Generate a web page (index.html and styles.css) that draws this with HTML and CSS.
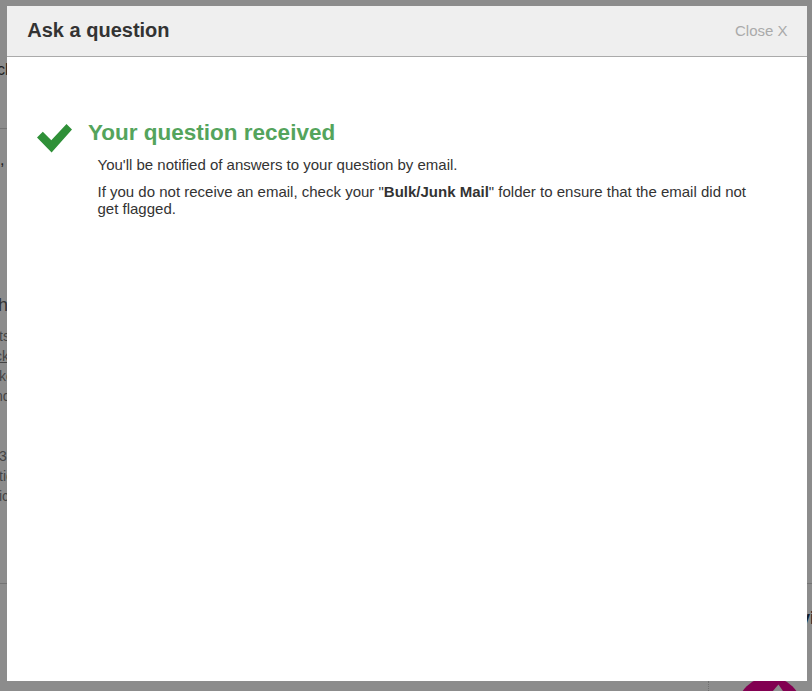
FILE: index.html
```html
<!DOCTYPE html>
<html lang="en">
<head>
<meta charset="utf-8">
<title>Ask a question</title>
<link rel="stylesheet" href="styles.css">
</head>
<body>
<div class="page">
  <div class="page-left">
    <div class="search">ch</div>
    <div class="comma">,</div>
    <div class="heading">h</div>
    <div class="copy">ts<br><u>ck</u><br>ke<br><span>nd</span></div>
    <div class="copy second">3<br>tio<br>ic</div>
  </div>
  <div class="page-bottom">
    <div class="divider-dots"></div>
    <svg class="badge" width="68" height="68" viewBox="0 0 68 68"><circle cx="33.500" cy="34" r="32.300" fill="#820051"/><path d="M36 17L42.500 9.500L49 19Z" fill="#8c8c8c"/></svg>
  </div>
  <div class="page-right"><span>vi</span></div>
</div>
<section class="modal">
  <header class="modal-header">
    <h1>Ask a question</h1>
    <span class="close">Close X</span>
  </header>
  <div class="modal-body">
    <svg class="check" width="36" height="30" viewBox="0 0 36 30"><path d="M0 14.500L5.800 8.700L14.300 17.200L29.500 1L35 6.600L14.600 29.500Z" fill="#2f9038"/></svg>
    <div class="message">
      <h2>Your question received</h2>
      <p>You'll be notified of answers to your question by email.</p>
      <p>If you do not receive an email, check your "<b>Bulk/Junk Mail</b>" folder to ensure that the email did not get flagged.</p>
    </div>
  </div>
</section>
</body>
</html>
```
FILE: styles.css
```css
* { box-sizing: border-box; }
body {
  margin: 0;
  height: 691px;
  overflow: hidden;
  position: relative;
  background: #8c8c8c;
  color: #333;
  font-family: "Liberation Sans", Arial, sans-serif;
}
h1, h2, p { margin: 0; }
.page {
  display: grid;
  grid-template-columns: 7px 800px 5px;
  height: 691px;
}
.page > div { overflow: hidden; }
.page-left {
  height: 584px;
  padding-top: 60px;
  border-bottom: 1px solid #747474;
  white-space: nowrap;
}
.search {
  height: 69px;
  border-bottom: 1px solid #747474;
  font-size: 16px;
  line-height: 20px;
  text-indent: -3px;
  color: #1c1c1c;
}
.comma { margin-top: 21px; height: 20px; font-size: 16px; line-height: 20px; color: #1c1c1c; }
.heading { margin-top: 125px; height: 31px; font-size: 18px; line-height: 20px; text-indent: -2px; }
.copy { height: 80px; font-size: 14px; line-height: 20px; margin-left: -1px; color: #444; }
.copy u { margin-left: -4px; }
.copy span { margin-left: -4px; }
.second { margin-top: 40px; }
.page-bottom { display: flex; align-items: flex-start; height: 691px; padding: 681px 0 0 701px; }
.divider-dots { width: 1px; height: 10px; border-left: 1px dotted #707070; }
.badge { flex: none; margin: -6px 0 0 27px; }
.page-right { height: 691px; padding-top: 583px; }
.page-right span {
  display: block;
  padding-top: 24px;
  border-top: 1px solid #747474;
  font-size: 18px;
  font-weight: bold;
  line-height: 20px;
  text-indent: -7px;
  color: #111c2c;
}
.modal {
  position: absolute;
  left: 7px;
  top: 6px;
  width: 800px;
  height: 675px;
  background: #fff;
}
.modal-header {
  display: flex;
  align-items: center;
  justify-content: space-between;
  height: 51px;
  padding: 0 19.5px 2px 20.3px;
  background: #efefef;
  border-bottom: 1px solid #aaa;
}
.modal-header h1 { font-size: 20px; line-height: 24px; }
.close { padding-top: 2px; font-size: 15px; line-height: 18px; color: #aaa; }
.modal-body { display: flex; padding: 61px 57px 0 30px; }
.check { flex: none; margin-top: 5px; }
.message { padding-left: 15px; }
.message h2 { padding-top: 1px; height: 28px; font-size: 22.5px; line-height: 28px; color: #54a45c; }
.message p { margin: 10px 0 0 9.5px; font-size: 15px; line-height: 17px; }
```
